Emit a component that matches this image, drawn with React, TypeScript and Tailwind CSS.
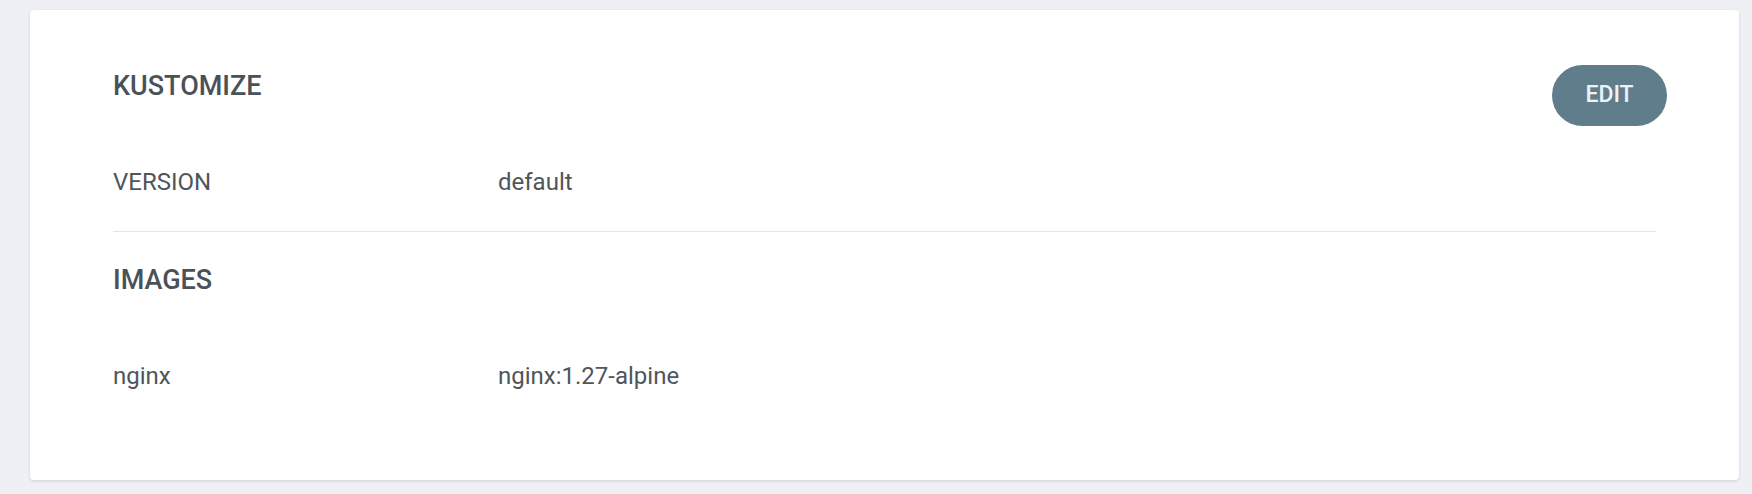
export default function App() {
  return (
    <div
      className="min-h-screen bg-[#eef0f5] pt-[10px] pl-[30px] pr-[13px] pb-[14px]"
      style={{ fontFamily: 'Roboto, "Liberation Sans", sans-serif' }}
    >
      <div className="bg-white rounded-[4px] shadow-[0_1px_3px_rgba(0,0,0,0.14)] pl-[83px] pr-[72px] pt-[55px] pb-[88px]">
        <div className="flex items-start justify-between">
          <h2 className="text-[27px] leading-[42px] font-medium text-[#4a5157]">KUSTOMIZE</h2>
          <button className="h-[61px] w-[115px] rounded-full bg-[#607d8b] text-[23px] font-medium text-[#eef2f4]">
            EDIT
          </button>
        </div>

        <div className="mt-[40px] flex text-[24px] leading-[32px] text-[#50555a]">
          <span className="w-[385px]">VERSION</span>
          <span>default</span>
        </div>

        <div className="mt-[33px] mr-[11px] h-px bg-[#e2e6e8]" />

        <h2 className="mt-[27px] text-[27px] leading-[42px] font-medium text-[#4a5157]">IMAGES</h2>

        <div className="mt-[59px] flex text-[24px] leading-[32px] text-[#50555a]">
          <span className="w-[385px]">nginx</span>
          <span>nginx:1.27-alpine</span>
        </div>
      </div>
    </div>
  );
}
